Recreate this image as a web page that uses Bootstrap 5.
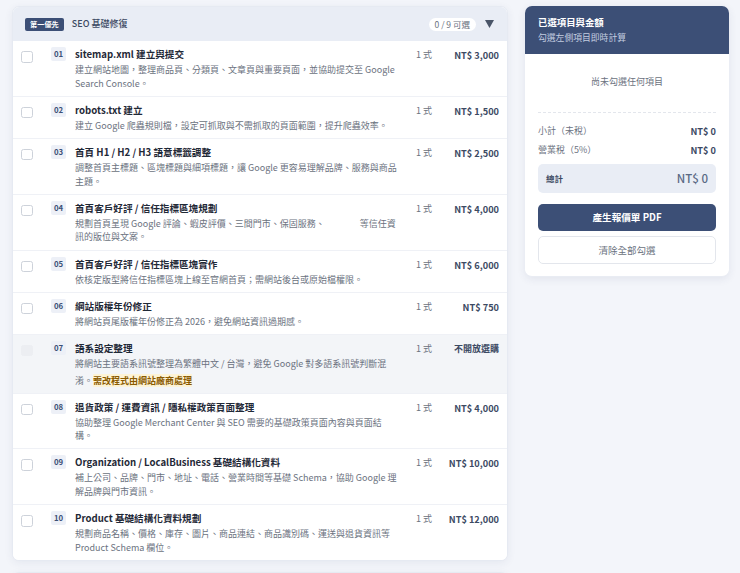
<!DOCTYPE html>
<html lang="zh-Hant">
<head>
<meta charset="utf-8">
<title>報價</title>
<link href="https://cdn.jsdelivr.net/npm/bootstrap@5.3.0/dist/css/bootstrap.min.css" rel="stylesheet">
<style>
html,body{height:573px;overflow:hidden}
body{background:#f3f5fa;font-family:"Noto Sans CJK TC","Noto Sans",sans-serif;color:#1f2937;font-size:10px}
.page-wrap{padding:6px 11px 0 12px;gap:17px;align-items:flex-start}
.main-col{width:496px;flex:none}
.side-col{width:204px;flex:none}
.sect{border-radius:7px;background:#fff;border:1px solid #e6eaf2;box-shadow:0 2px 8px rgba(40,60,100,.07);overflow:hidden}
.sect-head{height:34px;background:#e9edf5;padding:0 13px 0 12px}
.prio{background:#3c4f76;color:#fff;font-size:7.2px;font-weight:700;border-radius:2px;padding:0 5px;height:13px;line-height:13px}
.sect-name{font-size:9px;font-weight:500;color:#3c4a63;margin-left:8px}
.count{background:#fff;border-radius:7px;font-size:8.5px;color:#6b7280;height:13px;line-height:13px;padding:0 6px}
.tri{width:9px;height:8px;margin-left:9px}
.item{display:grid;grid-template-columns:30px 24px 1fr 25px 58px;padding:5px 8px 5.6px;border-top:1px solid #eff1f6;background:#fff}
.item:first-child{border-top:0}
.item.off{background:#f3f5f8}
.tick{width:11.5px;height:11.5px;border:1px solid #cdd2da;border-radius:2.5px;background:#fff;margin-top:5px;display:block}
.off .tick{background:#eceef2;border-color:#eceef2}
.num{width:15px;height:14px;background:#edf0f7;border-radius:2px;font-size:7.8px;font-weight:700;color:#3c4f76;text-align:center;line-height:14px;margin-top:1px}
.ttl{font-size:9.6px;font-weight:700;color:#1f2937;line-height:15px;margin-top:1px}
.dsc{font-size:9px;color:#6b7280;line-height:13.6px;max-width:323px;padding-top:1px}
.warn{display:inline-block;margin-top:3px;background:#fdf3d6;color:#8a5a00;font-weight:700}
.gapper{display:inline-block;width:35px}
.unit{font-size:9px;color:#6b7280;line-height:14px;margin-top:2px;white-space:nowrap}
.price{font-size:9.2px;font-weight:700;color:#3c4a63;line-height:14px;margin-top:2px;text-align:right;white-space:nowrap}
.off .price{font-size:9px}
.side-card{border-radius:7px;background:#fff;box-shadow:0 2px 8px rgba(40,60,100,.09);overflow:hidden;border-bottom:1px solid #e9ecf3}
.side-head{background:#3c4f76;color:#fff;height:48px;padding:9px 13px 0}
.side-title{font-size:9.4px;font-weight:700;line-height:15px}
.side-sub{font-size:8.8px;color:#c3cde0;line-height:15px}
.side-body{padding:0 13px 12px}
.none{font-size:9px;color:#6b7280;height:59px;border-bottom:1px dashed #e3e6ec;text-align:center;line-height:55px}
.sum-line{font-size:9px;color:#6b7280;line-height:14px;margin-top:4.7px}
.sum-first{margin-top:11px}
.sum-line b{color:#3c4a63;font-weight:700;font-size:9.2px}
.total{background:#e9edf5;border-radius:5px;height:29px;padding:0 8px;margin-top:7px;color:#3c4a63}
.total .lab{font-size:8.5px;font-weight:700}
.total .val{font-size:11.5px;font-weight:500;color:#5a6a85}
.btn-gen{background:#3c4f76;color:#fff;border:0;border-radius:5px;height:27.5px;font-size:9.6px;font-weight:700;padding:0;margin-top:11px;width:100%;display:block}
.btn-clear{background:#fff;color:#6b7280;border:1px solid #e3e6ec;border-radius:5px;height:27.5px;font-size:9.5px;padding:0;margin-top:5px;width:100%;display:block}
.next-card{height:20px;margin-top:11px;border-radius:7px 7px 0 0}
</style>
</head>
<body>
<div class="d-flex page-wrap">
  <div class="main-col">
    <section class="sect">
      <div class="sect-head d-flex align-items-center">
        <span class="prio">第一優先</span>
        <span class="sect-name">SEO 基礎修復</span>
        <span class="count ms-auto">0 / 9 可選</span>
        <svg class="tri" viewBox="0 0 9 8"><path d="M0 0h9L4.5 8z" fill="#4a5568"/></svg>
      </div>
      <div>
        <div class="item"><span class="tick"></span><span class="num">01</span><div><div class="ttl">sitemap.xml 建立與提交</div><div class="dsc">建立網站地圖，整理商品頁、分類頁、文章頁與重要頁面，並協助提交至 Google Search Console。</div></div><div class="unit">1 式</div><div class="price">NT$ 3,000</div></div>
        <div class="item"><span class="tick"></span><span class="num">02</span><div><div class="ttl">robots.txt 建立</div><div class="dsc">建立 Google 爬蟲規則檔，設定可抓取與不需抓取的頁面範圍，提升爬蟲效率。</div></div><div class="unit">1 式</div><div class="price">NT$ 1,500</div></div>
        <div class="item"><span class="tick"></span><span class="num">03</span><div><div class="ttl">首頁 H1 / H2 / H3 語意標籤調整</div><div class="dsc">調整首頁主標題、區塊標題與細項標題，讓 Google 更容易理解品牌、服務與商品主題。</div></div><div class="unit">1 式</div><div class="price">NT$ 2,500</div></div>
        <div class="item"><span class="tick"></span><span class="num">04</span><div><div class="ttl">首頁客戶好評 / 信任指標區塊規劃</div><div class="dsc">規劃首頁呈現 Google 評論、蝦皮評價、三間門市、保固服務、<span class="gapper"></span>等信任資訊的版位與文案。</div></div><div class="unit">1 式</div><div class="price">NT$ 4,000</div></div>
        <div class="item"><span class="tick"></span><span class="num">05</span><div><div class="ttl">首頁客戶好評 / 信任指標區塊實作</div><div class="dsc">依核定版型將信任指標區塊上線至官網首頁；需網站後台或原始檔權限。</div></div><div class="unit">1 式</div><div class="price">NT$ 6,000</div></div>
        <div class="item"><span class="tick"></span><span class="num">06</span><div><div class="ttl">網站版權年份修正</div><div class="dsc">將網站頁尾版權年份修正為 2026，避免網站資訊過期感。</div></div><div class="unit">1 式</div><div class="price">NT$ 750</div></div>
        <div class="item off"><span class="tick"></span><span class="num">07</span><div><div class="ttl">語系設定整理</div><div class="dsc">將網站主要語系訊號整理為繁體中文 / 台灣，避免 Google 對多語系訊號判斷混淆。<span class="warn">需改程式由網站廠商處理</span></div></div><div class="unit">1 式</div><div class="price">不開放選購</div></div>
        <div class="item"><span class="tick"></span><span class="num">08</span><div><div class="ttl">退貨政策 / 運費資訊 / 隱私權政策頁面整理</div><div class="dsc">協助整理 Google Merchant Center 與 SEO 需要的基礎政策頁面內容與頁面結構。</div></div><div class="unit">1 式</div><div class="price">NT$ 4,000</div></div>
        <div class="item"><span class="tick"></span><span class="num">09</span><div><div class="ttl">Organization / LocalBusiness 基礎結構化資料</div><div class="dsc">補上公司、品牌、門市、地址、電話、營業時間等基礎 Schema，協助 Google 理解品牌與門市資訊。</div></div><div class="unit">1 式</div><div class="price">NT$ 10,000</div></div>
        <div class="item"><span class="tick"></span><span class="num">10</span><div><div class="ttl">Product 基礎結構化資料規劃</div><div class="dsc">規劃商品名稱、價格、庫存、圖片、商品連結、商品識別碼、運送與退貨資訊等 Product Schema 欄位。</div></div><div class="unit">1 式</div><div class="price">NT$ 12,000</div></div>
      </div>
    </section>
    <div class="sect next-card"></div>
  </div>
  <aside class="side-col">
    <div class="side-card">
      <div class="side-head"><div class="side-title">已選項目與金額</div><div class="side-sub">勾選左側項目即時計算</div></div>
      <div class="side-body">
        <div class="none">尚未勾選任何項目</div>
        <div class="sum-line sum-first d-flex justify-content-between"><span>小計（未稅）</span><b>NT$ 0</b></div>
        <div class="sum-line d-flex justify-content-between"><span>營業稅（5%）</span><b>NT$ 0</b></div>
        <div class="total d-flex justify-content-between align-items-center"><span class="lab">總計</span><span class="val">NT$ 0</span></div>
        <button class="btn btn-gen" type="button">產生報價單 PDF</button>
        <button class="btn btn-clear" type="button">清除全部勾選</button>
      </div>
    </div>
  </aside>
</div>
</body>
</html>
